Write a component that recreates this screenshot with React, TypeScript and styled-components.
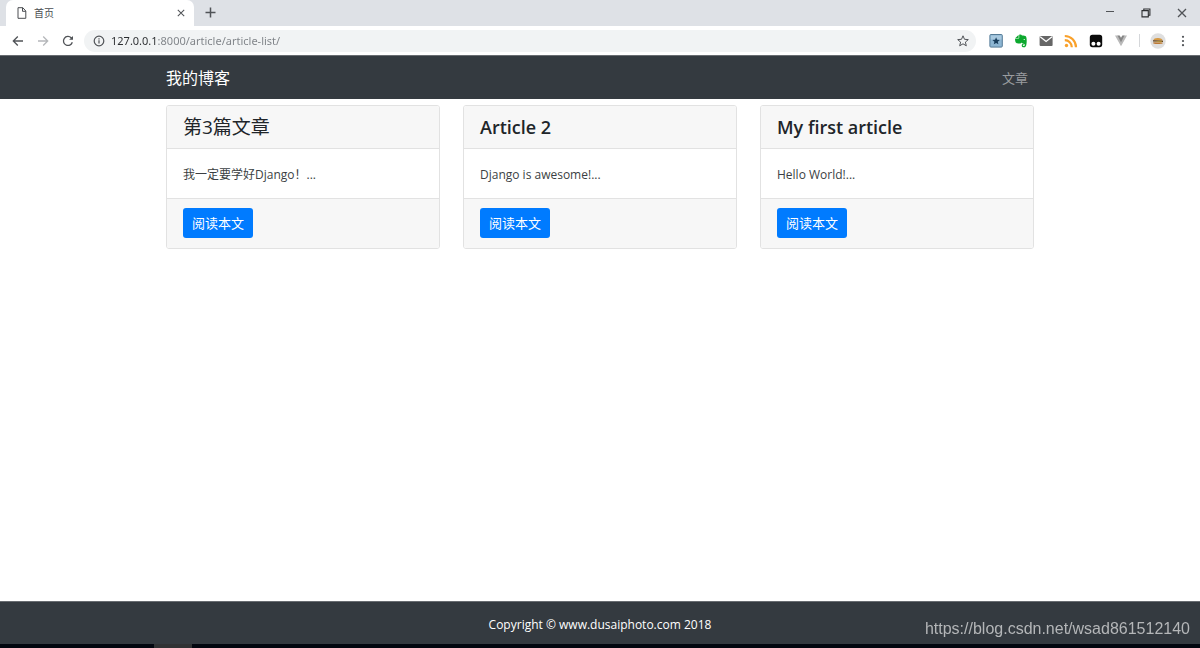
import React from 'react';
import styled, { createGlobalStyle } from 'styled-components';

const GlobalStyle = createGlobalStyle`
  *, *::before, *::after { box-sizing: border-box; }
  body {
    margin: 0;
    background: #fff;
    color: #212529;
    font-family: "Open Sans", "Noto Sans CJK SC", sans-serif;
    font-size: 12px;
    line-height: 20px;
  }
  h1, h2, p { margin: 0; }
  button { font-family: inherit; cursor: pointer; }
`;

const Window = styled.div`
  display: flex;
  flex-direction: column;
  min-height: 100vh;
`;

const TabStrip = styled.div`
  display: flex;
  align-items: flex-start;
  height: 26px;
  padding-left: 6px;
  background: #dee1e6;
`;

const Tab = styled.div`
  display: flex;
  align-items: center;
  width: 188px;
  height: 26px;
  padding: 0 6px 0 10px;
  border-radius: 7px 7px 0 0;
  background: #fff;
  color: #4a4d51;
  font-size: 10px;
`;

const TabTitle = styled.span`
  flex: 1;
  margin-left: 6px;
`;

const IconButton = styled.button<{ $size?: number }>`
  display: flex;
  align-items: center;
  justify-content: center;
  flex: none;
  width: ${(p) => p.$size ?? 25}px;
  height: ${(p) => p.$size ?? 25}px;
  padding: 0;
  border: 0;
  background: none;
  color: #505357;

  &:disabled { color: #b5b7ba; }
`;

const NewTab = styled(IconButton)`
  margin-left: 4px;
`;

const WindowControls = styled.div`
  display: flex;
  gap: 11px;
  margin-left: auto;
  padding-right: 6px;
`;

const Toolbar = styled.div`
  display: flex;
  align-items: center;
  height: 29px;
  padding: 0 5px;
  background: #fff;
`;

const AddressBar = styled.div`
  display: flex;
  align-items: center;
  flex: 1;
  height: 22px;
  margin: 0 7px 0 4px;
  padding: 0 1px 0 9px;
  border-radius: 11px;
  background: #f1f3f4;
  color: #505357;
`;

const AddressInput = styled.input`
  flex: 1;
  min-width: 0;
  height: 20px;
  margin-left: 6px;
  padding: 0;
  border: 0;
  outline: 0;
  background: linear-gradient(to right, #2b2d30 46px, #7d8186 46px);
  background-clip: text;
  -webkit-background-clip: text;
  -webkit-text-fill-color: transparent;
  font-family: "Noto Sans", sans-serif;
  font-size: 11px;
`;

const Divider = styled.span`
  width: 1px;
  height: 13px;
  margin: 0 5px 0 6px;
  background: #d5d7da;
`;

const Container = styled.div`
  width: 100%;
  max-width: 868px;
  margin: 0 auto;
`;

const Navbar = styled.nav`
  height: 44px;
  border-top: 1px solid #686c71;
  background: #343a40;
`;

const NavRow = styled(Container)`
  display: flex;
  align-items: center;
  justify-content: space-between;
  height: 43px;
`;

const Brand = styled.a`
  color: #fff;
  font-size: 16px;
  text-decoration: none;
`;

const NavLink = styled.a`
  padding-right: 6px;
  color: #999c9f;
  font-size: 13px;
  text-decoration: none;
`;

const Main = styled.main`
  flex: 1;
  padding-top: 6px;
`;

const CardGrid = styled(Container)`
  display: grid;
  grid-template-columns: repeat(3, 1fr);
  gap: 23px;
`;

const Card = styled.article`
  overflow: hidden;
  border: 1px solid #e2e2e2;
  border-radius: 3px;
  background: #fff;
`;

const CardTitle = styled.h2`
  padding: 9px 16px;
  border-bottom: 1px solid #e2e2e2;
  background: #f7f7f7;
  font-size: 18px;
  font-weight: 600;
  line-height: 24px;

  &:lang(zh) {
    font-size: 19px;
    font-weight: 400;
  }
`;

const CardText = styled.p`
  padding: 16px 16px 13px;
  color: #3b3f43;
`;

const CardFooter = styled.div`
  display: flex;
  padding: 9px 16px 10px;
  border-top: 1px solid #e2e2e2;
  background: #f7f7f7;
`;

const ReadButton = styled.button`
  height: 30px;
  padding: 0 9px;
  border: 0;
  border-radius: 3px;
  background: #007bff;
  color: #fff;
  font-size: 13px;
  line-height: 20px;
`;

const Footer = styled.footer`
  display: flex;
  align-items: center;
  justify-content: center;
  height: 43px;
  padding-top: 4px;
  border-top: 1px solid #686c71;
  background: #343a40;
  color: #fff;
`;

const Taskbar = styled.div`
  height: 4px;
  padding-left: 154px;
  background: #02060f;
`;

const TaskbarItem = styled.div`
  width: 38px;
  height: 4px;
  background: #303234;
`;

const Watermark = styled.span`
  position: fixed;
  right: 10px;
  bottom: 9px;
  color: #b4b6b8;
  font-family: "Liberation Sans", sans-serif;
  font-size: 16px;
`;

const strokeProps = { fill: 'none', stroke: 'currentColor', strokeWidth: 1.3 };

const PageIcon = () => (
  <svg width="12" height="12" viewBox="0 0 12 12" {...strokeProps} strokeWidth="1">
    <path d="M2 .7h4.8L9.8 4v7.3H2zM6.5.8v3.5h3.3" />
  </svg>
);

const CrossIcon = ({ size }: { size: number }) => (
  <svg width={size} height={size} viewBox="0 0 10 10" {...strokeProps}>
    <path d="M1 1l8 8M9 1L1 9" />
  </svg>
);

const PlusIcon = () => (
  <svg width="11" height="11" viewBox="0 0 11 11" {...strokeProps} strokeWidth="1.5">
    <path d="M5.5 .5v10M.5 5.5h10" />
  </svg>
);

const MinimizeIcon = () => (
  <svg width="10" height="10" viewBox="0 0 10 10" {...strokeProps} strokeWidth="1">
    <path d="M1 3.5h8" />
  </svg>
);

const RestoreIcon = () => (
  <svg width="10" height="10" viewBox="0 0 10 10" {...strokeProps} stroke="#2c2e30" strokeWidth="1.1">
    <path d="M1 2.6h6.3v6.3H1zM2.8 2.4V1h6.1v6.2H7.5" />
  </svg>
);

const ArrowIcon = ({ forward }: { forward?: boolean }) => (
  <svg width="12" height="12" viewBox="0 0 12 12" {...strokeProps}>
    <path d={forward ? 'M1 6h9.5M6.2 1.5L10.7 6l-4.5 4.5' : 'M11 6H1.5M5.8 1.5L1.3 6l4.5 4.5'} />
  </svg>
);

const ReloadIcon = () => (
  <svg width="12" height="12" viewBox="0 0 12 12" {...strokeProps} strokeWidth="1.3">
    <path d="M10.3 7.2A4.5 4.5 0 1 1 9.2 2.8L10.4 4" />
    <path d="M11 .9v3.9H7.1z" fill="currentColor" stroke="none" />
  </svg>
);

const InfoIcon = () => (
  <svg width="12" height="12" viewBox="0 0 12 12" {...strokeProps} strokeWidth="1.2">
    <circle cx="6" cy="6" r="4.8" />
    <path d="M6 5.3v3.3M6 3.2v1.3" />
  </svg>
);

const STAR = 'M6 .8l1.5 3.5 3.8.3-2.9 2.5.9 3.7L6 8.8l-3.3 2 .9-3.7L.7 4.6l3.8-.3z';

const StarIcon = () => (
  <svg width="12" height="12" viewBox="0 0 12 12" {...strokeProps} strokeWidth="1">
    <path d={STAR} />
  </svg>
);

const BookmarkExtension = () => (
  <svg width="14" height="14" viewBox="0 0 14 14">
    <rect x=".9" y=".5" width="12.4" height="12.6" rx="1" fill="#8db6d3" stroke="#557b96" />
    <path d="M1.8 1.5h10.6v4H1.800z" fill="#a9c9df" />
    <path d={STAR} fill="#183d5c" transform="translate(2.9 2.8) scale(.7)" />
  </svg>
);

const EvernoteExtension = () => (
  <svg width="14" height="14" viewBox="0 0 14 14" fill="#0ca82e">
    <path d="M4.6.9v3H1.4z" />
    <path d="M5.2.8C6.4.4 7.6.7 8 1.5c1.5.1 3.5.2 4 .9.8 1.3.9 5.1.4 8.1-.3 1.9-1 2.8-2.3 2.8-1.6 0-2.4-.7-2.4-1.9 0-1 .6-1.6 1.9-1.6v1c-.6 0-.8.2-.8.5 0 .4.4.6.9.6.8 0 1.1-.5 1-1.2-.1-.7-.5-1.2-1.6-1.3-.7 0-1.2-.3-1.4-.9-.4.9-1.2 1.1-2.5 1C2.6 9.3 1.6 8.9 1.3 7.2 1 6 1 5.1 1.200 4.500h3.200c.6 0 .8-.3.8-.8z" />
    <path d="M9.4 5.8c.1-.7.4-.9.8-.9.5 0 .8.4.9 1z" fill="#fff" />
  </svg>
);

const MailExtension = () => (
  <svg width="14" height="12" viewBox="0 0 14 12">
    <rect x=".6" y=".9" width="13" height="10.2" rx="1" fill="#666" />
    <path d="M1.2 1.8l5.900 4.700 5.900-4.700" fill="none" stroke="#fff" strokeWidth="1.3" />
  </svg>
);

const FeedExtension = () => (
  <svg width="14" height="14" viewBox="0 0 14 14" fill="none" stroke="#f9a12b" strokeWidth="2.2">
    <circle cx="2.5" cy="11.5" r="1.7" fill="#f9a12b" stroke="none" />
    <path d="M.8 6.2a7 7 0 0 1 7 7M.8 2a11.2 11.2 0 0 1 11.2 11.2" />
  </svg>
);

const TampermonkeyExtension = () => (
  <svg width="14" height="14" viewBox="0 0 14 14">
    <rect x=".8" y=".8" width="12.4" height="12.4" rx="2.6" fill="#0b0b0b" />
    <circle cx="4.400" cy="9.8" r="2" fill="#fff" />
    <circle cx="9.6" cy="9.8" r="2" fill="#fff" />
  </svg>
);

const VueExtension = () => (
  <svg width="14" height="14" viewBox="0 0 14 14">
    <path d="M1 1.5h3.3L7 6.5l2.700-5H13L7 12.200z" fill="#b9b9b9" />
    <path d="M3.500 1.500h2.200L7 3.800l1.300-2.300h2.200L7 8.200z" fill="#858585" />
  </svg>
);

const ProfilePicture = () => (
  <svg width="16" height="16" viewBox="0 0 16 16">
    <circle cx="8" cy="8" r="7.7" fill="#dfdfdf" />
    <path d="M3.3 7.5c.2-2 2.2-2.700 4.700-2.600 2.800 0 4.500.9 4.700 2.800z" fill="#d69a45" />
    <path d="M3 7.300l10 .4v1.200l-10-.3z" fill="#5a3b1e" />
    <path d="M4 8.300l4 .2 4.500-.1-2 1.200z" fill="#e9c335" />
    <path d="M3.300 9.200l9.300.2v1.100c-2 .7-7 .6-9.300-.1z" fill="#bd7935" />
  </svg>
);

const MenuIcon = () => (
  <svg width="12" height="12" viewBox="0 0 12 12" fill="currentColor">
    <circle cx="6" cy="1.8" r="1.1" />
    <circle cx="6" cy="6" r="1.1" />
    <circle cx="6" cy="10.2" r="1.1" />
  </svg>
);

const extensions = [
  { name: 'Bookmarks', Icon: BookmarkExtension },
  { name: 'Evernote', Icon: EvernoteExtension },
  { name: 'Mail', Icon: MailExtension },
  { name: 'Feeds', Icon: FeedExtension },
  { name: 'Tampermonkey', Icon: TampermonkeyExtension },
  { name: 'Vue devtools', Icon: VueExtension },
];

const articles = [
  { id: 3, lang: 'zh', title: '第3篇文章', body: '我一定要学好Django！...' },
  { id: 2, lang: 'en', title: 'Article 2', body: 'Django is awesome!...' },
  { id: 1, lang: 'en', title: 'My first article', body: 'Hello World!...' },
];

export default function App() {
  return (
    <Window>
      <GlobalStyle />
      <TabStrip>
        <Tab>
          <PageIcon />
          <TabTitle>首页</TabTitle>
          <IconButton $size={14} aria-label="Close tab"><CrossIcon size={8} /></IconButton>
        </Tab>
        <NewTab aria-label="New tab"><PlusIcon /></NewTab>
        <WindowControls>
          <IconButton aria-label="Minimize"><MinimizeIcon /></IconButton>
          <IconButton aria-label="Restore"><RestoreIcon /></IconButton>
          <IconButton aria-label="Close"><CrossIcon size={10} /></IconButton>
        </WindowControls>
      </TabStrip>
      <Toolbar>
        <IconButton aria-label="Back"><ArrowIcon /></IconButton>
        <IconButton aria-label="Forward" disabled><ArrowIcon forward /></IconButton>
        <IconButton aria-label="Reload"><ReloadIcon /></IconButton>
        <AddressBar>
          <InfoIcon />
          <AddressInput aria-label="Address" defaultValue="127.0.0.1:8000/article/article-list/" />
          <IconButton aria-label="Bookmark this page"><StarIcon /></IconButton>
        </AddressBar>
        {extensions.map(({ name, Icon }) => (
          <IconButton key={name} aria-label={name}><Icon /></IconButton>
        ))}
        <Divider />
        <IconButton aria-label="Profile"><ProfilePicture /></IconButton>
        <IconButton aria-label="Menu"><MenuIcon /></IconButton>
      </Toolbar>
      <Navbar>
        <NavRow>
          <Brand href="#">我的博客</Brand>
          <NavLink href="#">文章</NavLink>
        </NavRow>
      </Navbar>
      <Main>
        <CardGrid>
          {articles.map(({ id, lang, title, body }) => (
            <Card key={id}>
              <CardTitle lang={lang}>{title}</CardTitle>
              <CardText>{body}</CardText>
              <CardFooter><ReadButton>阅读本文</ReadButton></CardFooter>
            </Card>
          ))}
        </CardGrid>
      </Main>
      <Footer>Copyright © www.dusaiphoto.com 2018</Footer>
      <Taskbar><TaskbarItem /></Taskbar>
      <Watermark>https://blog.csdn.net/wsad861512140</Watermark>
    </Window>
  );
}
